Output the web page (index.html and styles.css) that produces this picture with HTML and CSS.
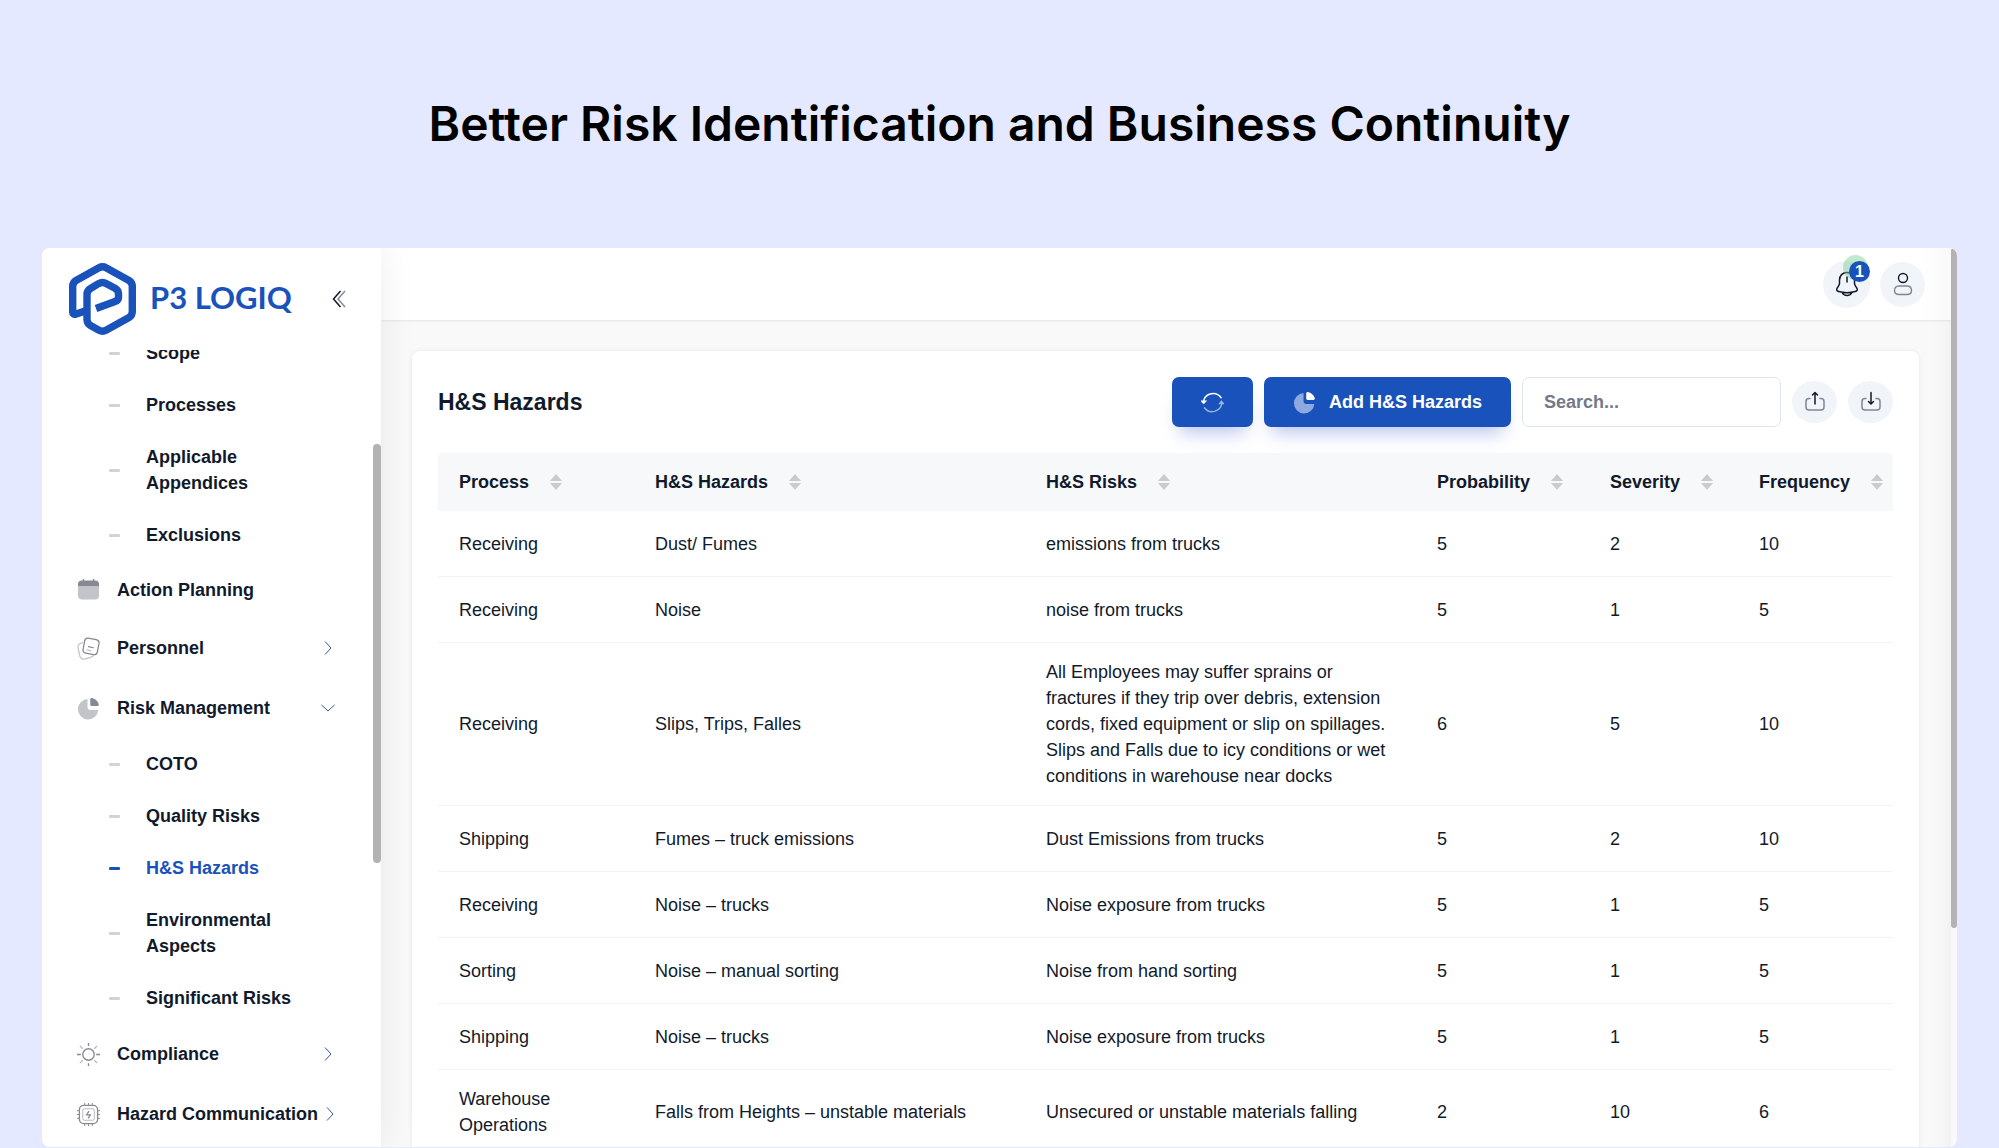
FILE: index.html
```html
<!DOCTYPE html>
<html lang="en">
    <head>
        <meta charset="UTF-8">
        <meta name="viewport" content="width=device-width, initial-scale=1.0">
        <title>P3 LOGIQ - H&amp;S Hazards</title>
        <link rel="stylesheet" href="styles.css">
    </head>
    <body>
        <!-- shared icons -->
        <svg class="sprite" aria-hidden="true">
            <symbol id="chevron-right" viewBox="0 0 16 16"><path d="M5 1.500 11 8l-6 6.500" fill="none" stroke="currentColor"/></symbol>
            <symbol id="chevron-down" viewBox="0 0 16 16"><path d="M1.500 5 8 11l6.500-6" fill="none" stroke="currentColor"/></symbol>
            <symbol id="pie" viewBox="0 0 24 24">
                <path d="M11 2.200V11a2.500 2.500 0 0 0 2.500 2.500h8.700A10.600 10.600 0 1 1 11 2.200z" fill="currentColor" opacity=".5"/>
                <path d="M13.800 2.500c0-1 .8-1.600 1.700-1.400 3.300.7 5.900 3 7.200 6.200.4 1-.3 2-1.400 2h-6c-.9 0-1.500-.6-1.500-1.500z" fill="currentColor"/>
            </symbol>
            <symbol id="sort" viewBox="0 0 12 16"><path d="M6 0l6 7H0zM0 9h12l-6 7z" fill="currentColor"/></symbol>
        </svg>

        <h1 class="hero">Better Risk Identification and Business Continuity</h1>

        <div class="app">
            <aside class="sidebar">
                <div class="brand">
                    <svg class="logo" viewBox="0 0 67 72" aria-hidden="true">
                        <path d="M16 48 6.500 51.200Q3.700 51.500 3.700 49V23.500Q3.700 19.500 7 17.500L30 4.700Q33.500 2.800 37 4.700L60 17.500Q63.300 19.500 63.300 23.500V48.500Q63.300 52.500 60 54.500L37 67.300Q33.500 69.200 30 67.300L21.500 62.500Q18 60.500 18 56.500V31.500Q18 27.500 21.500 25.500L29.500 20.700Q33.500 18.500 37.500 20.700L46 25.300Q49.500 27.300 49.500 31V34Q49.500 37.500 46 38.500L27 45.500" fill="none" stroke="currentColor" stroke-width="7.400" stroke-linejoin="round"/>
                    </svg>
                    <span class="brand-name">P3 LOGIQ</span>
                    <button class="collapse" type="button" aria-label="Collapse menu">
                        <svg viewBox="0 0 14 18" fill="none" stroke="currentColor" stroke-width="1.500"><path d="M8.500 1 1.500 9l7 8"/><path d="M13 1 6 9l7 8" opacity=".5"/></svg>
                    </button>
                </div>
                <nav class="menu">
                    <ul>
                        <li><a class="sub" href="#">Scope</a></li>
                        <li><a class="sub" href="#">Processes</a></li>
                        <li><a class="sub" href="#">Applicable Appendices</a></li>
                        <li><a class="sub" href="#">Exclusions</a></li>
                        <li>
                            <a class="item item-plain" href="#">
                                <svg class="item-icon" viewBox="0 0 24 24" fill="currentColor"><path d="M1 8.500h22V18c0 3-1.500 4.500-4.500 4.500h-13C2.500 22.500 1 21 1 18z" opacity=".5"/><path d="M1 8.500V6.300C1 4 2.500 2.500 5 2.500h1V1h1.500v1.500h9V1H18v1.500h1c2.500 0 4 1.500 4 3.800v2.200z"/></svg>
                                <span>Action Planning</span>
                            </a>
                        </li>
                        <li>
                            <a class="item" href="#">
                                <svg class="item-icon" viewBox="0 0 24 24" fill="none" stroke="currentColor" stroke-width="1.300" stroke-linecap="round"><path d="M6 6 3 7Q.5 8 1 11l2 9q1 3.500 4.500 3l6-1.500q2-.5 3.500-2M10.500 13.500l4 1" opacity=".5"/><path d="M11.500 1.200l8.500 1.500q3.500.8 3 4l-1.800 9q-.7 3.200-4 2.700l-8-1.500q-3.500-.7-2.800-4l1.500-8.500q.6-3.500 3.600-3.200zM12 10l5 1.200"/></svg>
                                <span>Personnel</span>
                                <svg class="chevron"><use href="#chevron-right"/></svg>
                            </a>
                        </li>
                        <li>
                            <a class="item" href="#">
                                <svg class="item-icon"><use href="#pie"/></svg>
                                <span>Risk Management</span>
                                <svg class="chevron"><use href="#chevron-down"/></svg>
                            </a>
                            <ul>
                                <li><a class="sub" href="#">COTO</a></li>
                                <li><a class="sub" href="#">Quality Risks</a></li>
                                <li><a class="sub active" href="#">H&amp;S Hazards</a></li>
                                <li><a class="sub" href="#">Environmental Aspects</a></li>
                                <li><a class="sub" href="#">Significant Risks</a></li>
                            </ul>
                        </li>
                        <li>
                            <a class="item" href="#">
                                <svg class="item-icon" viewBox="0 0 24 24" fill="none" stroke="currentColor" stroke-width="1.400"><circle cx="12" cy="12" r="6"/><path d="M12 0v3M12 21v3M0 12h4M20 12h4"/><path d="M3 3l3 3M18 18l3 3M21 3l-3 3M6 18l-3 3" opacity=".6"/></svg>
                                <span>Compliance</span>
                                <svg class="chevron"><use href="#chevron-right"/></svg>
                            </a>
                        </li>
                        <li>
                            <a class="item" href="#">
                                <svg class="item-icon" viewBox="0 0 24 24" fill="none" stroke="currentColor"><rect x="2.500" y="2.500" width="19" height="19" rx="4.500" stroke-width="1.400"/><rect x="6" y="6" width="12" height="12" rx="1.500" opacity=".6"/><path d="M8 0v2M12 0v2M16 0v2M8 22v2M12 22v2M16 22v2M0 8h2M0 12h2M0 16h2M22 8h2M22 12h2M22 16h2"/><path d="M12.500 8.500 10 12.300h4L11.500 16" stroke-width="1.300"/></svg>
                                <span>Hazard Communication</span>
                                <svg class="chevron"><use href="#chevron-right"/></svg>
                            </a>
                        </li>
                    </ul>
                </nav>
                <div class="thumb thumb-menu"></div>
            </aside>

            <main class="main">
                <header class="topbar">
                    <button class="round bell" type="button" aria-label="Notifications">
                        <svg viewBox="0 0 24 26" fill="none" stroke="currentColor" stroke-width="1.500" stroke-linecap="round"><path d="M12 1.500c-4.500 0-7.500 3.200-7.500 7.500v3.500c0 1.200-.6 2-1.500 3.300-2 2.500-1.700 4 .7 4.700 5.500 1.500 11.100 1.500 16.600 0 2.400-.7 2.700-2.200.7-4.700-.9-1.300-1.500-2.100-1.500-3.300V9c0-4.300-3-7.500-7.500-7.500zM7 21.500c1 2 3 3 5 3s4-1 5-3M12 6v5"/></svg>
                        <span class="pulse"></span>
                        <span class="badge">1</span>
                    </button>
                    <button class="round" type="button" aria-label="Account">
                        <svg viewBox="0 0 24 26" fill="none" stroke="currentColor" stroke-width="1.400"><circle cx="12" cy="7" r="4.500"/><path d="M8 15h8c3 0 4.500 2 4.500 4.500s-1.500 4-4.500 4H8c-3 0-4.500-1.500-4.500-4S5 15 8 15z" opacity=".5"/></svg>
                    </button>
                </header>

                <section class="card">
                    <div class="toolbar">
                        <h2>H&amp;S Hazards</h2>
                        <button class="btn" type="button" aria-label="Refresh">
                            <svg viewBox="0 0 24 24" fill="none" stroke="currentColor" stroke-width="1.500" stroke-linecap="round"><path d="M21 7A10.300 10.300 0 0 0 2.500 11"/><path d="M.8 10.600h4l-2 2.200z" fill="currentColor"/><g opacity=".55"><path d="M3.500 17.500A10.300 10.300 0 0 0 21.800 13"/><path d="M19.500 13h3.700l-1.900-2.200z" fill="currentColor"/></g></svg>
                        </button>
                        <button class="btn" type="button">
                            <svg><use href="#pie"/></svg>
                            Add H&amp;S Hazards
                        </button>
                        <input class="search" type="search" placeholder="Search..." aria-label="Search">
                        <button class="round round-flat" type="button" aria-label="Export">
                            <svg viewBox="0 0 24 24" fill="none" stroke="currentColor" stroke-width="1.500" stroke-linecap="round" stroke-linejoin="round"><path d="M7 8.500H6C4 8.500 3 9.500 3 11.500V17c0 2 1 3 3 3h12c2 0 3-1 3-3v-5.500c0-2-1-3-3-3h-1" opacity=".5"/><path d="M12 14V3M9.500 5 12 2.500 14.500 5"/></svg>
                        </button>
                        <button class="round round-flat" type="button" aria-label="Import">
                            <svg viewBox="0 0 24 24" fill="none" stroke="currentColor" stroke-width="1.500" stroke-linecap="round" stroke-linejoin="round"><path d="M7 8.500H6C4 8.500 3 9.500 3 11.500V17c0 2 1 3 3 3h12c2 0 3-1 3-3v-5.500c0-2-1-3-3-3h-1" opacity=".5"/><path d="M12 2.500v11M9.500 11.500 12 14l2.500-2.500"/></svg>
                        </button>
                    </div>

                    <table class="grid">
                        <colgroup>
                            <col class="col-process"><col><col><col class="col-probability"><col class="col-severity"><col class="col-frequency">
                        </colgroup>
                        <thead>
                            <tr>
                                <th>Process<svg><use href="#sort"/></svg></th>
                                <th>H&amp;S Hazards<svg><use href="#sort"/></svg></th>
                                <th>H&amp;S Risks<svg><use href="#sort"/></svg></th>
                                <th>Probability<svg><use href="#sort"/></svg></th>
                                <th>Severity<svg><use href="#sort"/></svg></th>
                                <th>Frequency<svg><use href="#sort"/></svg></th>
                            </tr>
                        </thead>
                        <tbody>
                            <tr><td>Receiving</td><td>Dust/ Fumes</td><td>emissions from trucks</td><td>5</td><td>2</td><td>10</td></tr>
                            <tr><td>Receiving</td><td>Noise</td><td>noise from trucks</td><td>5</td><td>1</td><td>5</td></tr>
                            <tr><td>Receiving</td><td>Slips, Trips, Falles</td><td>All Employees may suffer sprains or fractures if they trip over debris, extension cords, fixed equipment or slip on spillages. Slips and Falls due to icy conditions or wet conditions in warehouse near docks</td><td>6</td><td>5</td><td>10</td></tr>
                            <tr><td>Shipping</td><td>Fumes – truck emissions</td><td>Dust Emissions from trucks</td><td>5</td><td>2</td><td>10</td></tr>
                            <tr><td>Receiving</td><td>Noise – trucks</td><td>Noise exposure from trucks</td><td>5</td><td>1</td><td>5</td></tr>
                            <tr><td>Sorting</td><td>Noise – manual sorting</td><td>Noise from hand sorting</td><td>5</td><td>1</td><td>5</td></tr>
                            <tr><td>Shipping</td><td>Noise – trucks</td><td>Noise exposure from trucks</td><td>5</td><td>1</td><td>5</td></tr>
                            <tr><td>Warehouse Operations</td><td>Falls from Heights – unstable materials</td><td>Unsecured or unstable materials falling</td><td>2</td><td>10</td><td>6</td></tr>
                        </tbody>
                    </table>
                </section>
            </main>
            <div class="thumb thumb-page"></div>
        </div>
    </body>
</html>
```

FILE: styles.css
```css
*{
    box-sizing: border-box;
}
body{
    margin: 0;
    height: 100vh;
    overflow: hidden;
    display: flex;
    flex-direction: column;
    background-color: #e5e9ff;
    color: #111a2c;
    font-family: "Liberation Sans", Arial, sans-serif;
    font-size: 18px;
    line-height: 26px;
}
ul{
    list-style: none;
    margin: 0;
    padding: 0;
}
a{
    color: inherit;
    text-decoration: none;
}
button{
    font: inherit;
    color: inherit;
    border: 0;
    padding: 0;
    background: none;
    cursor: pointer;
}
.sprite{
    position: absolute;
    width: 0;
    height: 0;
}
.hero{
    flex: none;
    margin: 0;
    padding: 94px 20px;
    font-family: Inter, sans-serif;
    font-size: 48px;
    font-weight: 600;
    line-height: 60px;
    text-align: center;
    color: #000;
}

/* window */
.app{
    position: relative;
    flex: 1;
    min-height: 0;
    display: flex;
    margin: 0 42px 1px;
    border-radius: 8px;
    overflow: hidden;
    background-color: #f9f9f9;
}
.thumb{
    position: absolute;
    right: 0;
    background-color: #b3b3b3;
    border-radius: 4px;
}
.thumb-menu{
    top: 196px;
    width: 8px;
    height: 419px;
}
.thumb-page{
    top: 0;
    width: 6px;
    height: 680px;
}

/* sidebar */
.sidebar{
    position: relative;
    z-index: 1;
    flex: none;
    width: 339px;
    display: flex;
    flex-direction: column;
    background-color: #fff;
    box-shadow: 0 0 36px rgba(20, 20, 50, 0.08);
}
.brand{
    flex: none;
    height: 102px;
    padding: 0 35px 0 27px;
    display: flex;
    align-items: center;
    color: #1a52bb;
}
.logo{
    width: 67px;
    height: 72px;
}
.brand-name{
    flex: 1;
    margin-left: 14px;
    padding-bottom: 4px;
    font-family: Lato, sans-serif;
    font-size: 31px;
    font-weight: 700;
}
.collapse{
    color: #111a2c;
    height: 18px;
}
.collapse svg{
    display: block;
    width: 14px;
    height: 18px;
}
.menu{
    flex: 1;
    min-height: 0;
    overflow: hidden;
    font-weight: 700;
}
/* list is scrolled a little */
.menu > ul{
    margin-top: -23px;
}
.sub{
    display: flex;
    align-items: center;
    gap: 26px;
    padding: 13px 65px 13px 67px;
}
.sub::before{
    content: "";
    flex: none;
    width: 11px;
    height: 3px;
    border-radius: 1px;
    background-color: #cfd4dc;
}
.active{
    color: #1a52bb;
}
.active::before{
    background-color: #1a52bb;
}
.item{
    display: flex;
    align-items: center;
    height: 60px;
    padding: 0 45px 0 35px;
}
.item-plain{
    height: 57px;
}
.item span{
    flex: 1;
    margin-left: 17px;
    white-space: nowrap;
}
.item-icon{
    flex: none;
    width: 23px;
    height: 23px;
    color: #868993;
}
.chevron{
    flex: none;
    width: 16px;
    height: 16px;
    margin-left: 4px;
    color: #34579f;
}

/* content */
.main{
    flex: 1;
    min-width: 0;
    margin-right: 6px;
    overflow: hidden;
    box-shadow: inset -24px 0 24px -24px rgba(0, 0, 0, 0.06);
}
.topbar{
    display: flex;
    align-items: center;
    justify-content: flex-end;
    gap: 10px;
    height: 72px;
    padding-right: 26px;
    background: linear-gradient(to left, #f9f9f9, #fff 32px);
    box-shadow: 0 1px 2px rgba(0, 0, 0, 0.08);
}
.round{
    position: relative;
    flex: none;
    display: flex;
    align-items: center;
    justify-content: center;
    width: 45px;
    height: 45px;
    border-radius: 50%;
    background-color: #f1f4f8;
}
.round svg{
    width: 24px;
    height: 26px;
}
.bell{
    width: 47px;
    height: 47px;
}
.round-flat{
    height: 42px;
}
.round-flat svg{
    width: 24px;
    height: 24px;
}
.pulse{
    position: absolute;
    top: -6px;
    right: 2px;
    width: 25px;
    height: 25px;
    border-radius: 50%;
    background-color: rgba(120, 205, 145, 0.45);
}
.badge{
    position: absolute;
    top: 0;
    right: 0;
    width: 21px;
    height: 21px;
    border-radius: 50%;
    background-color: #1a52bb;
    color: #fff;
    font-size: 16px;
    font-weight: 700;
    line-height: 21px;
    text-align: center;
}
.card{
    margin: 31px 32px 0 31px;
    min-height: 100%;
    padding: 26px;
    background-color: #fff;
    border-radius: 8px;
    box-shadow: 0 0 4px rgba(0, 0, 0, 0.08);
}
.toolbar{
    display: flex;
    align-items: center;
    gap: 11px;
    margin-bottom: 26px;
}
.toolbar h2{
    flex: 1;
    margin: 0;
    font-size: 23px;
    font-weight: 700;
}
.btn{
    display: flex;
    align-items: center;
    gap: 13px;
    height: 50px;
    padding: 0 29px;
    border-radius: 7px;
    background-color: #1a52bb;
    color: #fff;
    font-weight: 700;
    box-shadow: 0 14px 18px -8px rgba(60, 90, 210, 0.35);
}
.btn svg{
    width: 23px;
    height: 23px;
}
.search{
    width: 259px;
    height: 50px;
    padding: 0 21px;
    border: 1px solid #dfe5ec;
    border-radius: 7px;
    background-color: #fff;
    font: inherit;
    font-weight: 700;
}
.search::placeholder{
    color: #747988;
    opacity: 1;
}

.grid{
    width: 100%;
    table-layout: fixed;
    border-collapse: separate;
    border-spacing: 0;
}
.col-process{
    width: 196px;
}
.col-probability{
    width: 173px;
}
.col-severity{
    width: 149px;
}
.col-frequency{
    width: 155px;
}
.grid th{
    height: 58px;
    padding: 0 0 0 21px;
    background-color: #f7f8fa;
    text-align: left;
    white-space: nowrap;
}
.grid th:first-child{
    border-top-left-radius: 5px;
}
.grid th:last-child{
    border-top-right-radius: 5px;
}
.grid th svg{
    width: 12px;
    height: 16px;
    margin-left: 21px;
    vertical-align: -2px;
    color: #c8cbd0;
}
.grid td{
    height: 66px;
    padding: 16px 20px 16px 21px;
    border-bottom: 1px solid #f0f3f7;
}
```
